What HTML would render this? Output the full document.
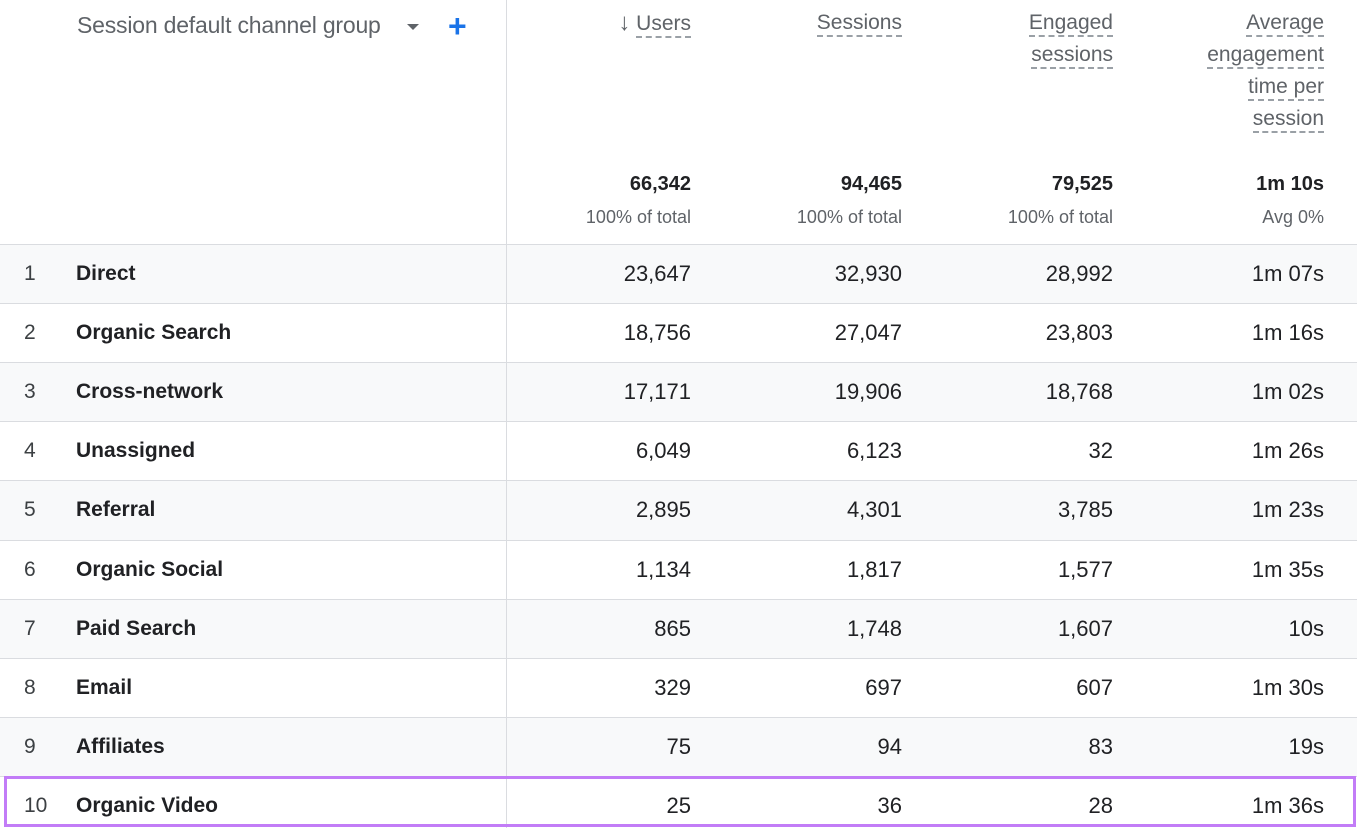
<!DOCTYPE html>
<html><head><meta charset="utf-8"><style>
*{margin:0;padding:0;box-sizing:border-box}
body{width:1357px;height:828px;background:#fff;font-family:"Liberation Sans",sans-serif;position:relative;overflow:hidden;color:#202124}
.a{position:absolute;white-space:nowrap}
.r{text-align:right}
.hd{color:#5f6368;font-size:21px;line-height:32px}
.hd span{border-bottom:2px dashed #9aa0a6;padding-bottom:1px}
.tot{font-size:20px;font-weight:bold;top:173px}
.pct{font-size:18px;color:#5f6368;top:207px}
.row{position:absolute;left:0;width:1357px;height:59px;border-bottom:1px solid #dadce0}
.row div{position:absolute;top:0;line-height:58px;font-size:21px;white-space:nowrap}
.n{left:24px;color:#3c4043}
.nm{left:76px;font-weight:bold;color:#202124}
.v{text-align:right;width:200px;font-size:22px!important}
</style></head><body>
<div class="a" style="left:506px;top:0;width:1px;height:828px;background:#dadce0;z-index:2"></div>
<div class="a hd" style="left:77px;top:9px;font-size:23px;letter-spacing:-0.2px">Session default channel group</div>
<div class="a" style="left:407px;top:24px;width:0;height:0;border-left:6px solid transparent;border-right:6px solid transparent;border-top:6px solid #5f6368"></div>
<div class="a" style="left:448px;top:1px;font-size:32px;color:#1a73e8;line-height:50px;font-weight:bold">+</div>

<div class="a hd r" style="right:666px;top:7px"><span style="border:none;color:#5f6368;font-size:24px">&#8595;</span> <span>Users</span></div>
<div class="a hd r" style="right:455px;top:7px"><span>Sessions</span></div>
<div class="a hd r" style="right:244px;top:7px"><span>Engaged</span><br><span>sessions</span></div>
<div class="a hd r" style="right:33px;top:7px"><span>Average</span><br><span>engagement</span><br><span>time per</span><br><span>session</span></div>

<div class="a tot r" style="right:666px">66,342</div>
<div class="a tot r" style="right:455px">94,465</div>
<div class="a tot r" style="right:244px">79,525</div>
<div class="a tot r" style="right:33px">1m 10s</div>
<div class="a pct r" style="right:666px">100% of total</div>
<div class="a pct r" style="right:455px">100% of total</div>
<div class="a pct r" style="right:244px">100% of total</div>
<div class="a pct r" style="right:33px">Avg 0%</div>

<div class="a" style="left:0;top:244px;width:1357px;height:1px;background:#dadce0"></div>

<div class="row" style="top:245px;background:#f8f9fa"><div class="n">1</div><div class="nm">Direct</div><div class="v" style="left:491px">23,647</div><div class="v" style="left:702px">32,930</div><div class="v" style="left:913px">28,992</div><div class="v" style="left:1124px">1m 07s</div></div>
<div class="row" style="top:304px"><div class="n">2</div><div class="nm">Organic Search</div><div class="v" style="left:491px">18,756</div><div class="v" style="left:702px">27,047</div><div class="v" style="left:913px">23,803</div><div class="v" style="left:1124px">1m 16s</div></div>
<div class="row" style="top:363px;background:#f8f9fa"><div class="n">3</div><div class="nm">Cross-network</div><div class="v" style="left:491px">17,171</div><div class="v" style="left:702px">19,906</div><div class="v" style="left:913px">18,768</div><div class="v" style="left:1124px">1m 02s</div></div>
<div class="row" style="top:422px"><div class="n">4</div><div class="nm">Unassigned</div><div class="v" style="left:491px">6,049</div><div class="v" style="left:702px">6,123</div><div class="v" style="left:913px">32</div><div class="v" style="left:1124px">1m 26s</div></div>
<div class="row" style="top:481px;height:60px;background:#f8f9fa"><div class="n">5</div><div class="nm">Referral</div><div class="v" style="left:491px">2,895</div><div class="v" style="left:702px">4,301</div><div class="v" style="left:913px">3,785</div><div class="v" style="left:1124px">1m 23s</div></div>
<div class="row" style="top:541px"><div class="n">6</div><div class="nm">Organic Social</div><div class="v" style="left:491px">1,134</div><div class="v" style="left:702px">1,817</div><div class="v" style="left:913px">1,577</div><div class="v" style="left:1124px">1m 35s</div></div>
<div class="row" style="top:600px;background:#f8f9fa"><div class="n">7</div><div class="nm">Paid Search</div><div class="v" style="left:491px">865</div><div class="v" style="left:702px">1,748</div><div class="v" style="left:913px">1,607</div><div class="v" style="left:1124px">10s</div></div>
<div class="row" style="top:659px"><div class="n">8</div><div class="nm">Email</div><div class="v" style="left:491px">329</div><div class="v" style="left:702px">697</div><div class="v" style="left:913px">607</div><div class="v" style="left:1124px">1m 30s</div></div>
<div class="row" style="top:718px;background:#f8f9fa"><div class="n">9</div><div class="nm">Affiliates</div><div class="v" style="left:491px">75</div><div class="v" style="left:702px">94</div><div class="v" style="left:913px">83</div><div class="v" style="left:1124px">19s</div></div>
<div class="row" style="top:777px;height:51px;border:none"><div class="n" style="line-height:57px">10</div><div class="nm" style="line-height:57px">Organic Video</div><div class="v" style="left:491px;line-height:57px">25</div><div class="v" style="left:702px;line-height:57px">36</div><div class="v" style="left:913px;line-height:57px">28</div><div class="v" style="left:1124px;line-height:57px">1m 36s</div></div>
<div class="a" style="left:4px;top:776px;width:1352px;height:51px;border:3px solid #c27cf7;z-index:3"></div>
</body></html>
